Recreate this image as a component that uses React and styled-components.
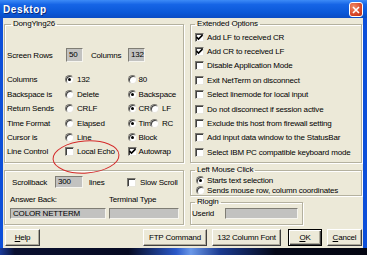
import styled, { createGlobalStyle } from "styled-components";

const GlobalStyle = createGlobalStyle`
  html, body { margin: 0; padding: 0; background: #0a1848; }
  body { font-family: "Liberation Sans", Arial, sans-serif; font-size: 8px; letter-spacing: -0.18px; color: #000; }
  * { box-sizing: border-box; }
`;

const Window = styled.div`
  position: relative;
  width: 367px;
  height: 255px;
  display: flex;
  flex-direction: column;
  overflow: hidden;
`;

const TitleBar = styled.div`
  height: 18px;
  flex: none;
  display: flex;
  align-items: center;
  justify-content: space-between;
  padding: 0 4px 0 3px;
  background: linear-gradient(#3d8bf7 0%, #1665e6 25%, #0a58d8 70%, #0a4cc4 100%);
`;

const Title = styled.span`
  color: #fff;
  font-weight: bold;
  font-size: 10px;
  letter-spacing: 0.6px;
  text-shadow: 1px 1px 0 #0a2a7a;
`;

const CloseButton = styled.div`
  width: 14px;
  height: 15px;
  margin-top: 1px;
  border: 1px solid #fff;
  border-radius: 3px;
  background: radial-gradient(circle at 30% 30%, #f08a64, #d8482a 60%, #b83014);
  display: flex;
  align-items: center;
  justify-content: center;
`;

const Body = styled.div`
  flex: 1;
  display: flex;
  flex-direction: column;
  background: #ece9d8;
  border-left: 3px solid #0d4fd9;
  border-right: 4px solid #0d4fd9;
  padding: 0 1px 2px 1px;
`;

const Panels = styled.div`
  display: grid;
  grid-template-columns: 180px 172px;
  column-gap: 6px;
`;

const Column = styled.div`
  display: flex;
  flex-direction: column;
  gap: ${(p) => p.$gap}px;
`;

const Group = styled.fieldset`
  margin: 0;
  min-width: 0;
  height: ${(p) => p.$h}px;
  width: ${(p) => (p.$w ? `${p.$w}px` : "auto")};
  padding: ${(p) => p.$pad || "0"};
  border: 1px solid #b4b19f;
  box-shadow: inset 1px 1px 0 #fff, 1px 1px 0 #fff;
`;

const Legend = styled.legend`
  margin-left: 4px;
  padding: 0 2px;
  line-height: 12px;
  font-size: 8px;
`;

const Row = styled.div`
  display: flex;
  align-items: center;
  height: ${(p) => p.$h}px;
  margin-top: ${(p) => p.$mt || 0}px;
`;

const Label = styled.span`
  width: ${(p) => (p.$w ? `${p.$w}px` : "auto")};
  margin-left: ${(p) => p.$ml || 0}px;
  flex: none;
  white-space: nowrap;
`;

const Field = styled.div`
  width: ${(p) => p.$w}px;
  height: ${(p) => p.$h}px;
  flex: none;
  background: #c2c2c0;
  border: 1px solid;
  border-color: #7f7d74 #f6f5ef #f6f5ef #7f7d74;
  padding: 0 2px;
  line-height: ${(p) => p.$h - 2}px;
  white-space: nowrap;
  overflow: hidden;
`;

const OptionGrid = styled.div`
  display: grid;
  grid-template-columns: 58px 63px auto;
  grid-auto-rows: 14.375px;
  align-items: center;
  margin-top: 10.8px;
`;

const Option = styled.span`
  display: flex;
  align-items: center;
  gap: ${(p) => (p.$gap !== undefined ? p.$gap : 3)}px;
  width: ${(p) => (p.$w ? `${p.$w}px` : "auto")};
  margin-left: ${(p) => p.$ml || 0}px;
  flex: none;
  white-space: nowrap;
`;

const Pair = styled.span`
  display: flex;
  align-items: center;
`;

const RadioDot = styled.span`
  position: relative;
  width: 9px;
  height: 9px;
  flex: none;
  border-radius: 50%;
  background: #fff;
  border: 1px solid;
  border-color: #7a7870 #e8e6dc #e8e6dc #7a7870;
  box-shadow: inset 1px 1px 0 #404040;
  display: flex;
  align-items: center;
  justify-content: center;
  &::after {
    content: "";
    width: 3px;
    height: 3px;
    border-radius: 50%;
    background: ${(p) => (p.$on ? "#000" : "transparent")};
  }
`;

const CheckBox = styled.span`
  width: 9px;
  height: 9px;
  flex: none;
  background: #fff;
  border: 1px solid;
  border-color: #7a7870 #e8e6dc #e8e6dc #7a7870;
  box-shadow: inset 1px 1px 0 #404040;
  display: flex;
  align-items: center;
  justify-content: center;
`;

const CheckList = styled.div`
  display: grid;
  grid-auto-rows: ${(p) => p.$rh}px;
  align-items: center;
  padding-left: ${(p) => p.$pl}px;
`;

const AnswerGrid = styled.div`
  display: grid;
  grid-template-columns: 96px 70px;
  grid-template-rows: 10px 11px;
  column-gap: 3px;
  row-gap: 4px;
  align-items: center;
  margin-top: 6px;
  margin-left: -1px;
`;

const ButtonRow = styled.div`
  display: flex;
  align-items: center;
  height: 17px;
  margin-top: 4px;
  padding: 0 0 0 1px;
`;

const Spacer = styled.div`
  flex: 1;
`;

const Button = styled.div`
  width: ${(p) => p.$w}px;
  height: 17px;
  margin-left: ${(p) => p.$ml || 0}px;
  flex: none;
  display: flex;
  align-items: center;
  justify-content: center;
  background: #ece9d8;
  border: 1px solid;
  border-color: ${(p) => (p.$default ? "#000" : "#fff #404040 #404040 #fff")};
  box-shadow: ${(p) =>
    p.$default
      ? "inset 1px 1px 0 #fff, inset -1px -1px 0 #404040, inset -2px -2px 0 #aca899"
      : "inset -1px -1px 0 #aca899"};
  white-space: nowrap;
  u { text-decoration: underline; }
`;

const Taskbar = styled.div`
  height: 7px;
  flex: none;
  background: linear-gradient(90deg, #1a3a9a 0%, #0a1030 4%, #060a22 35%, #2a58c8 48%, #6a98e8 52%, #1a3a90 60%, #050818 75%, #040612 100%);
`;

const Annotation = styled.svg`
  position: absolute;
  left: 51px;
  top: 138px;
  pointer-events: none;
`;

function Radio({ on, children, ...rest }) {
  return (
    <Option {...rest}>
      <RadioDot $on={on} />
      {children}
    </Option>
  );
}

function Check({ on, children, ...rest }) {
  return (
    <Option {...rest}>
      <CheckBox>
        {on && (
          <svg width="7" height="7" viewBox="0 0 7 7">
            <path d="M0.5 3 L2.5 5 L6.5 1" stroke="#000" strokeWidth="1.6" fill="none" />
          </svg>
        )}
      </CheckBox>
      {children}
    </Option>
  );
}

const extended = [
  ["Add LF to received CR", true],
  ["Add CR to received LF", true],
  ["Disable Application Mode", false],
  ["Exit NetTerm on disconnect", false],
  ["Select linemode for local input", false],
  ["Do not disconnect if session active", false],
  ["Exclude this host from firewall setting", false],
  ["Add input data window to the StatusBar", false],
  ["Select IBM PC compatible keyboard mode", false],
];

export default function App() {
  return (
    <>
      <GlobalStyle />
      <Window>
        <TitleBar>
          <Title>Desktop</Title>
          <CloseButton>
            <svg width="8" height="8" viewBox="0 0 8 8">
              <path d="M1 1 L7 7 M7 1 L1 7" stroke="#fff" strokeWidth="1.6" />
            </svg>
          </CloseButton>
        </TitleBar>
        <Body>
          <Panels>
            <Column $gap={7}>
              <Group $h={145} $pad="18px 0 0 2px">
                <Legend>DongYing26</Legend>
                <Row $h={14}>
                  <Label $w={59}>Screen Rows</Label>
                  <Field $w={17} $h={14}>50</Field>
                  <Label $w={37} $ml={8}>Columns</Label>
                  <Field $w={17} $h={14}>132</Field>
                </Row>
                <OptionGrid>
                  <Label>Columns</Label>
                  <Radio on>132</Radio>
                  <Radio $gap={1.5}>80</Radio>

                  <Label>Backspace is</Label>
                  <Radio>Delete</Radio>
                  <Radio on $gap={1.5}>Backspace</Radio>

                  <Label>Return Sends</Label>
                  <Radio>CRLF</Radio>
                  <Pair>
                    <Radio on $w={22} $gap={1.5}>CR</Radio>
                    <Radio $gap={3}>LF</Radio>
                  </Pair>

                  <Label>Time Format</Label>
                  <Radio>Elapsed</Radio>
                  <Pair>
                    <Radio on $w={22} $gap={1.5}>Time</Radio>
                    <Radio $gap={3}>RC</Radio>
                  </Pair>

                  <Label>Cursor is</Label>
                  <Radio>Line</Radio>
                  <Radio on $gap={1.5}>Block</Radio>

                  <Label>Line Control</Label>
                  <Check>Local Echo</Check>
                  <Check on $gap={1.5}>Autowrap</Check>
                </OptionGrid>
              </Group>
              <Group $h={55} $pad="5px 0 0 6px">
                <Row $h={12}>
                  <Label $w={43} $ml={1}>Scrollback</Label>
                  <Field $w={28} $h={12}>300</Field>
                  <Label $w={38} $ml={6}>lines</Label>
                  <Check $gap={4}>Slow Scroll</Check>
                </Row>
                <AnswerGrid>
                  <Label>Answer Back:</Label>
                  <Label>Terminal Type</Label>
                  <Field $w={96} $h={11}>COLOR NETTERM</Field>
                  <Field $w={70} $h={11} />
                </AnswerGrid>
              </Group>
            </Column>
            <Column $gap={0}>
              <Group $h={145}>
                <Legend>Extended Options</Legend>
                <CheckList $rh={14.375} $pl={4}>
                  {extended.map(([text, on]) => (
                    <Check key={text} on={on}>{text}</Check>
                  ))}
                </CheckList>
              </Group>
              <Group $h={32} style={{ marginTop: 1 }}>
                <Legend>Left Mouse Click</Legend>
                <CheckList $rh={9.5} $pl={5}>
                  <Radio on $gap={2}>Starts text selection</Radio>
                  <Radio $gap={2}>Sends mouse row, column coordinates</Radio>
                </CheckList>
              </Group>
              <Group $h={29} $w={113}>
                <Legend>Rlogin</Legend>
                <Row $h={11}>
                  <Label $w={33} $ml={1}>Userid</Label>
                  <Field $w={73} $h={11} />
                </Row>
              </Group>
            </Column>
          </Panels>
          <ButtonRow>
            <Button $w={35}><span><u>H</u>elp</span></Button>
            <Spacer />
            <Button $w={64}>FTP Command</Button>
            <Button $w={69} $ml={5}>132 Column Font</Button>
            <Button $w={34} $ml={7} $default><span><u>O</u>K</span></Button>
            <Button $w={35} $ml={5}><span><u>C</u>ancel</span></Button>
          </ButtonRow>
        </Body>
        <Taskbar />
        <Annotation width="70" height="38" viewBox="0 0 70 38">
          <ellipse cx="35" cy="19" rx="33" ry="16" transform="rotate(-4 35 19)" fill="none" stroke="#d42a2a" strokeWidth="1" />
        </Annotation>
      </Window>
    </>
  );
}
